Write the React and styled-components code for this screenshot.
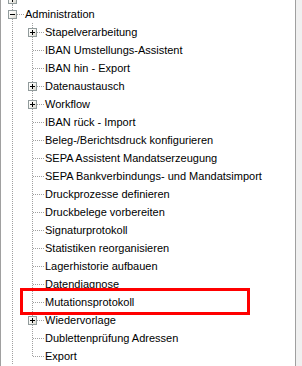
import React from 'react';
import styled, { createGlobalStyle, css } from 'styled-components';

const Global = createGlobalStyle`
  html, body { margin: 0; padding: 0; background: #f0f0f0; }
  body {
    width: 302px; height: 366px; overflow: hidden;
    font-family: "Liberation Sans", Arial, sans-serif;
  }
`;

const LINE = '#a0a0a0';
const vDots = `repeating-linear-gradient(to bottom, ${LINE} 0 1px, transparent 1px 2px)`;
const hDots = `repeating-linear-gradient(to right, ${LINE} 0 1px, transparent 1px 2px)`;

const Frame = styled.div`
  display: flex;
  width: 302px;
  height: 366px;
  background: #f0f0f0;
`;

const TreePane = styled.div`
  box-sizing: border-box;
  width: 296px;
  height: 366px;
  flex: none;
  background: #fff;
  border-left: 1px solid ${LINE};
  border-right: 1px solid ${LINE};
  padding-left: 1px;
  overflow: hidden;
`;

const Row = styled.div`
  position: relative;
  display: flex;
  height: ${p => p.$h || 18}px;
  ${p => p.$marked && css`
    &::after {
      content: '';
      position: absolute;
      z-index: 3;
      left: 18px;
      top: -5px;
      width: 230px;
      height: 27px;
      box-sizing: border-box;
      border: 3px solid #ff0000;
    }
  `}
`;

const Cell = styled.div`
  position: relative;
  width: 20px;
  flex: none;
  ${p => p.$v && css`
    &::before {
      content: '';
      position: absolute;
      left: 10px;
      top: 0;
      width: 1px;
      height: ${p.$last ? '10px' : '100%'};
      background: ${vDots};
    }
  `}
  ${p => p.$h && css`
    &::after {
      content: '';
      position: absolute;
      left: 11px;
      top: 9px;
      width: 11px;
      height: 1px;
      background: ${hDots};
    }
  `}
`;

const Expander = styled.span`
  position: absolute;
  z-index: 1;
  left: 6px;
  top: ${p => p.$top ?? 5}px;
  width: 9px;
  height: 9px;
  box-sizing: border-box;
  border: 1px solid #919b9c;
  background: linear-gradient(135deg, #ffffff 0%, #f4f4f0 50%, #d8d5cc 100%);
  &::before {
    content: '';
    position: absolute;
    left: 1px;
    top: 3px;
    width: 5px;
    height: 1px;
    background: #000;
  }
  ${p => p.$plus && css`
    &::after {
      content: '';
      position: absolute;
      left: 3px;
      top: 1px;
      width: 1px;
      height: 5px;
      background: #000;
    }
  `}
`;

const Label = styled.span`
  padding-left: 3px;
  font-size: 11px;
  line-height: 18px;
  color: #000;
  white-space: nowrap;
`;

const children = [
  { t: 'Stapelverarbeitung', plus: true },
  { t: 'IBAN Umstellungs-Assistent' },
  { t: 'IBAN hin - Export' },
  { t: 'Datenaustausch', plus: true },
  { t: 'Workflow', plus: true },
  { t: 'IBAN rück - Import' },
  { t: 'Beleg-/Berichtsdruck konfigurieren' },
  { t: 'SEPA Assistent Mandatserzeugung' },
  { t: 'SEPA Bankverbindungs- und Mandatsimport' },
  { t: 'Druckprozesse definieren' },
  { t: 'Druckbelege vorbereiten' },
  { t: 'Signaturprotokoll' },
  { t: 'Statistiken reorganisieren' },
  { t: 'Lagerhistorie aufbauen' },
  { t: 'Datendiagnose' },
  { t: 'Mutationsprotokoll', marked: true },
  { t: 'Wiedervorlage', plus: true },
  { t: 'Dublettenprüfung Adressen' },
  { t: 'Export' },
];

export default function App() {
  return (
    <>
      <Global />
      <Frame>
        <TreePane>
          <Row $h={5}>
            <Cell $v>
              <Expander $plus $top={-5} />
            </Cell>
          </Row>
          <Row>
            <Cell $v $h>
              <Expander />
            </Cell>
            <Label>Administration</Label>
          </Row>
          {children.map((c, i) => (
            <Row key={c.t} $marked={c.marked}>
              <Cell $v />
              <Cell $v $h $last={i === children.length - 1}>
                {c.plus && <Expander $plus />}
              </Cell>
              <Label>{c.t}</Label>
            </Row>
          ))}
        </TreePane>
      </Frame>
    </>
  );
}
